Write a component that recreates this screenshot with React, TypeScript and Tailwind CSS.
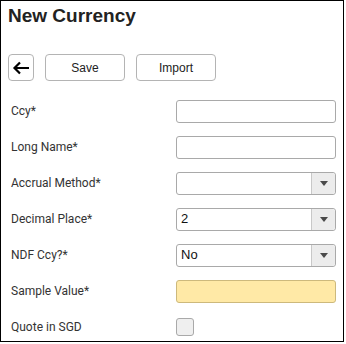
import { ReactNode } from "react";

const Caret = () => (
  <div className="flex w-[24px] h-full items-center justify-center border-l border-[#c8c8c8] bg-[#ececec] rounded-r-[3px]">
    <svg width="8" height="5" viewBox="0 0 8 5">
      <polygon points="0,0 8,0 4,5" fill="#4a4a4a" />
    </svg>
  </div>
);

const TextBox = ({ yellow }: { yellow?: boolean }) => (
  <div
    className={
      yellow
        ? "w-[160px] h-[23px] rounded-[3px] border border-[#cdb97c] bg-[#ffe9a6]"
        : "w-[160px] h-[23px] rounded-[3px] border border-[#a9a9a9] bg-white"
    }
  />
);

const Dropdown = ({ value }: { value?: string }) => (
  <div className="flex w-[160px] h-[23px] items-center rounded-[3px] border border-[#a9a9a9] bg-white">
    <span className="flex-1 pl-[4px] text-[13px] text-[#111] font-['Liberation_Sans',Arial,sans-serif]">
      {value}
    </span>
    <Caret />
  </div>
);

const Row = ({ label, children }: { label: string; children: ReactNode }) => (
  <div className="flex h-[36px] items-center">
    <div className="w-[165px] text-[12px] text-[#333] font-['Roboto',sans-serif]">{label}</div>
    {children}
  </div>
);

export default function App() {
  return (
    <div className="w-[344px] h-[342px] border border-black bg-white font-['Liberation_Sans',Arial,sans-serif]">
      <h1 className="pl-[7px] pt-[3px] text-[19px] leading-[24px] font-bold text-[#222]">New Currency</h1>

      <div className="flex gap-[11px] pl-[7px] mt-[26px]">
        <button className="flex w-[26px] h-[27px] items-center justify-center rounded-[4px] border border-[#b4b4b4] bg-white">
          <svg width="18" height="14" viewBox="0 0 18 14">
            <path d="M17 7H2.5M8 1.5L2.5 7L8 12.5" fill="none" stroke="#000" strokeWidth="2.2" />
          </svg>
        </button>
        <button className="w-[80px] h-[27px] rounded-[4px] border border-[#b4b4b4] bg-white text-[12px] text-[#222]">
          Save
        </button>
        <button className="w-[80px] h-[27px] rounded-[4px] border border-[#b4b4b4] bg-white text-[12px] text-[#222]">
          Import
        </button>
      </div>

      <div className="pl-[10px] mt-[12px]">
        <Row label="Ccy*">
          <TextBox />
        </Row>
        <Row label="Long Name*">
          <TextBox />
        </Row>
        <Row label="Accrual Method*">
          <Dropdown />
        </Row>
        <Row label="Decimal Place*">
          <Dropdown value="2" />
        </Row>
        <Row label="NDF Ccy?*">
          <Dropdown value="No" />
        </Row>
        <Row label="Sample Value*">
          <TextBox yellow />
        </Row>
        <Row label="Quote in SGD">
          <div className="w-[18px] h-[18px] rounded-[3px] border border-[#a9a9a9] bg-[#efefef]" />
        </Row>
      </div>
    </div>
  );
}
